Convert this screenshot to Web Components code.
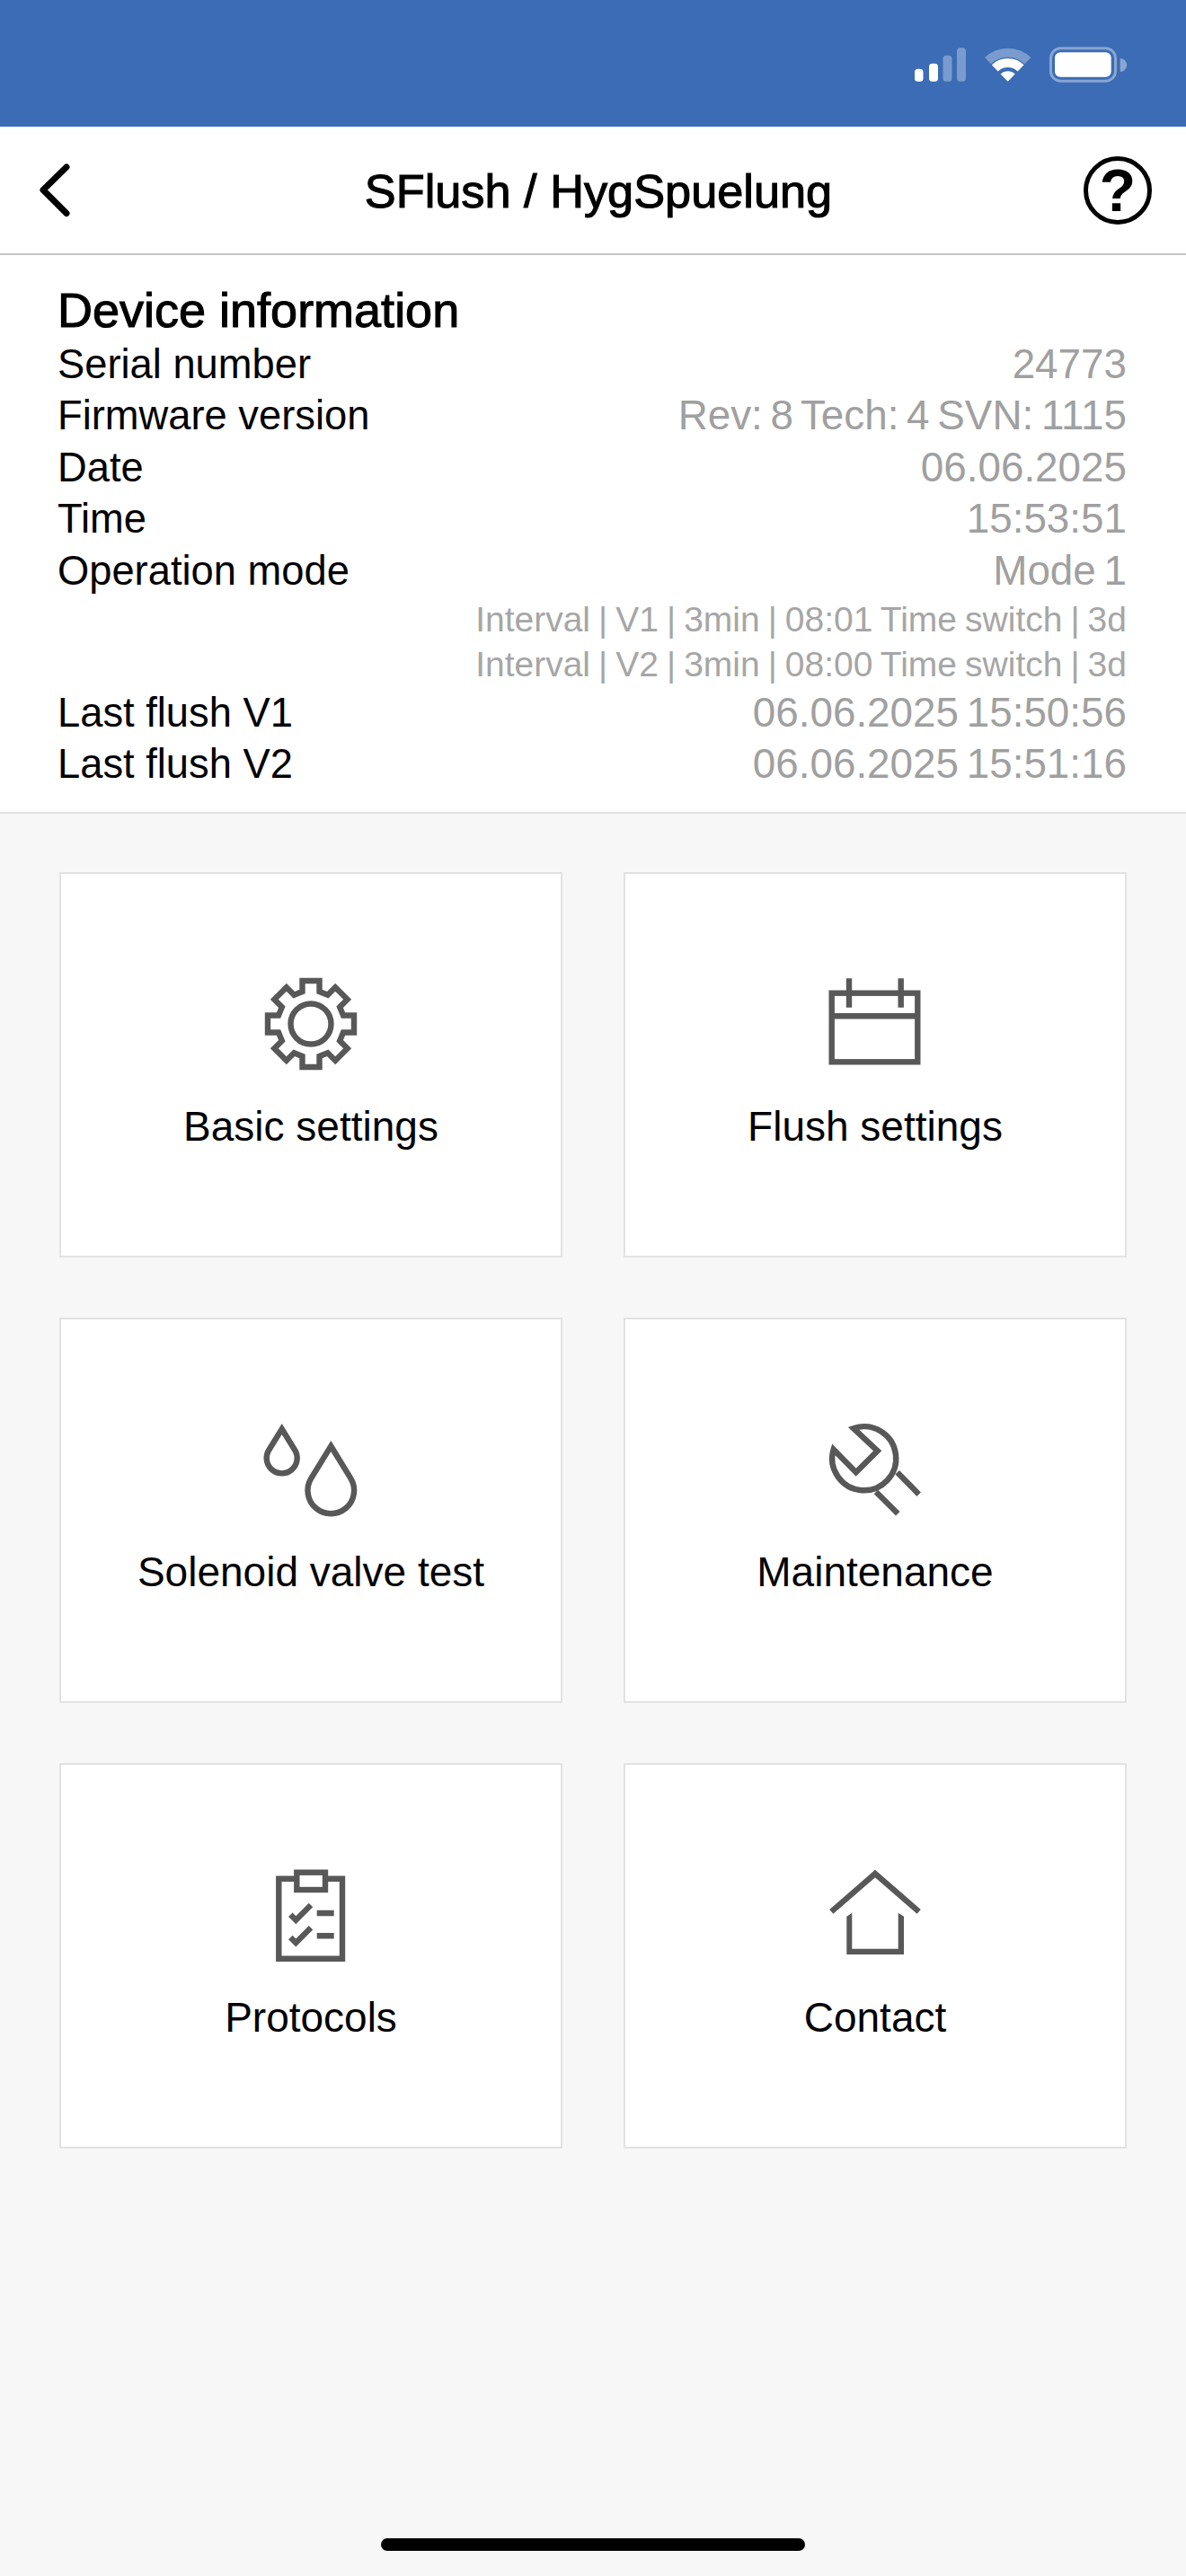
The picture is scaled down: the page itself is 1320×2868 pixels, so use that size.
<!DOCTYPE html>
<html lang="en">
<head>
<meta charset="utf-8">
<title>SFlush / HygSpuelung</title>
<style>
html,body{margin:0;padding:0;background:#f7f7f7}
body{font-family:"Liberation Sans",Arial,sans-serif;color:#000}
</style>
</head>
<body>
<app-screen>
  <status-bar></status-bar>
  <nav-header title="SFlush / HygSpuelung"></nav-header>
  <info-panel heading="Device information">
    <info-row label="Serial number" value="24773"></info-row>
    <info-row label="Firmware version" value="Rev: 8 Tech: 4 SVN: 1115"></info-row>
    <info-row label="Date" value="06.06.2025"></info-row>
    <info-row label="Time" value="15:53:51"></info-row>
    <info-row label="Operation mode" value="Mode 1"></info-row>
    <info-row small value="Interval | V1 | 3min | 08:01 Time switch | 3d"></info-row>
    <info-row small value="Interval | V2 | 3min | 08:00 Time switch | 3d"></info-row>
    <info-row label="Last flush V1" value="06.06.2025 15:50:56"></info-row>
    <info-row label="Last flush V2" value="06.06.2025 15:51:16"></info-row>
  </info-panel>
  <menu-grid>
    <menu-card label="Basic settings"><line-icon name="gear"></line-icon></menu-card>
    <menu-card label="Flush settings"><line-icon name="calendar"></line-icon></menu-card>
    <menu-card label="Solenoid valve test"><line-icon name="drops"></line-icon></menu-card>
    <menu-card label="Maintenance"><line-icon name="wrench"></line-icon></menu-card>
    <menu-card label="Protocols"><line-icon name="clipboard"></line-icon></menu-card>
    <menu-card label="Contact"><line-icon name="house"></line-icon></menu-card>
  </menu-grid>
  <home-bar></home-bar>
</app-screen>
<script>
function gearPath(){
  var pts=[],teeth=[[-9.5,-36],[-9.5,-48],[9.5,-48],[9.5,-36]];
  for(var i=0;i<8;i++){
    var a=i*Math.PI/4,c=Math.cos(a),s=Math.sin(a);
    teeth.forEach(function(p){pts.push((60+p[0]*c-p[1]*s).toFixed(2)+' '+(60+p[0]*s+p[1]*c).toFixed(2));});
  }
  return 'M'+pts.join('L')+'Z';
}
var ICONS={
  gear:'<path d="'+gearPath()+'"/><circle cx="60" cy="60" r="22.5"/>',
  calendar:'<rect x="11.7" y="25.7" width="95.6" height="76.6"/><path d="M11.7 51.3H107.3M31 9.3V41.7M88.7 9.3V41.7"/>',
  drops:'<path d="M27.7 15L42.2 38.5A17 17 0 1 1 13.2 38.5Z"/><path d="M82.3 34L104.3 69.9A25.8 25.8 0 1 1 60.3 69.9Z"/>',
  wrench:'<path d="M36 14.3L62.7 39.3L38.7 63.3L13.7 37.7A35.5 35.5 0 1 0 36 14.3Z"/><path d="M84.7 63.3L108.7 87.7M61 85L85.3 109.3"/>',
  clipboard:'<path d="M44.3 19.7H24.3V108.7H95V19.7H76"/><rect x="44.3" y="12.7" width="31.7" height="19.3"/><path d="M37.3 59.7L43.3 65.7L60 49M37.3 85L43.3 91L60 74.3M66.7 58H85.7M66.7 83.3H85.7"/>',
  house:'<path d="M11.3 56.3L60 14L108.7 56.3"/><path fill="#585858" stroke="none" d="M28.3 61.7L34.3 57.7V97.7H85.7V57.7L92 61.7V104H28.3Z"/>'
};
function def(name,css,html){
  customElements.define(name,class extends HTMLElement{
    connectedCallback(){
      if(this.shadowRoot)return;
      var r=this.attachShadow({mode:'open'});
      r.innerHTML='<style>'+css+'</style>'+(typeof html==='function'?html(this):html);
    }
  });
}
var F='"Liberation Sans",Arial,sans-serif';
def('app-screen',':host{display:flex;flex-direction:column;width:1320px;height:2868px;background:#f7f7f7;overflow:hidden}','<slot></slot>');
def('status-bar',':host{display:flex;justify-content:flex-end;box-sizing:border-box;height:141px;padding:30px 50px 0 0;background:#3b6cb5}svg{display:block}',
`<svg width="280" height="70" viewBox="990 30 280 70" fill="#fff">
<rect x="1018" y="76.7" width="9.5" height="14" rx="3.5"/>
<rect x="1034" y="70.7" width="10" height="20" rx="3.5"/>
<rect x="1049.5" y="61.7" width="10" height="29" rx="3.5" opacity=".32"/>
<rect x="1065" y="53.3" width="10" height="37.4" rx="3.5" opacity=".32"/>
<g transform="translate(1121.7 90.7)">
<path d="M-8-8.3A11.5 11.5 0 0 1 8-8.3L0 0Z"/>
<path d="M-14.4-14.9A20.7 20.7 0 0 1 14.4-14.9" fill="none" stroke="#fff" stroke-width="10"/>
<path d="M-22.2-23A32 32 0 0 1 22.2-23" fill="none" stroke="#fff" stroke-width="10" opacity=".32"/>
</g>
<rect x="1169.5" y="53.8" width="72" height="36.4" rx="11" fill="none" stroke="#fff" stroke-width="3" opacity=".4"/>
<rect x="1174" y="58.3" width="62.7" height="27.4" rx="6"/>
<path d="M1246.7 65A7.5 7.5 0 0 1 1246.7 80Z" opacity=".4"/>
</svg>`);
def('nav-header',':host{display:grid;grid-template-columns:1fr auto 1fr;align-items:center;box-sizing:border-box;height:143px;padding:0 38px 0 40px;background:#fff;border-bottom:2px solid #c4c4c4}'+
'.t{font:400 52.3px/60px '+F+';-webkit-text-stroke:1.1px #000;color:#000;position:relative;left:5px;top:1px}'+
'.h{justify-self:end;box-sizing:border-box;width:76px;height:76px;border:5px solid #000;border-radius:50%;display:flex;align-items:center;justify-content:center;font:700 66px/1 '+F+';color:#000}'+
'svg{display:block}',
function(el){return `<svg width="40" height="64" viewBox="0 0 40 64" fill="none" stroke="#000" stroke-width="7" stroke-linecap="round" stroke-linejoin="round"><path d="M34 6L8 31.5L34 57.5"/></svg><div class="t">${el.getAttribute('title')}</div><div class="h">?</div>`});
def('info-panel',':host{display:block;box-sizing:border-box;height:622px;padding:30px 66px 0 64px;background:#fff;border-bottom:2px solid #e2e2e2}'+
'.h{height:62.6px;font:400 54px/62px '+F+';-webkit-text-stroke:1.1px #000;color:#000}',
function(el){return `<div class="h">${el.getAttribute('heading')}</div><slot></slot>`});
def('info-row',':host{display:flex;justify-content:space-between;height:57.6px;font:400 45.3px/57.6px '+F+';color:#000;white-space:nowrap}'+
':host([small]){height:50px;line-height:50px;font-size:39px}'+
'.v{color:#a0a0a0;font-size:45.8px;word-spacing:-4px}:host([small]) .v{color:#a6a6a6;font-size:39px;word-spacing:-1.8px}',
function(el){return `<span>${el.getAttribute('label')||''}</span><span class="v">${el.getAttribute('value')}</span>`});
def('menu-grid',':host{display:grid;grid-template-columns:560px 560px;grid-auto-rows:429px;column-gap:68px;row-gap:67px;padding:65px 66px 0}','<slot></slot>');
def('menu-card',':host{display:flex;flex-direction:column;align-items:center;box-sizing:border-box;padding-top:107px;background:#fff;border:2px solid #e2e2e2}'+
'.l{margin-top:29px;font:400 46px/50px '+F+';color:#000;white-space:nowrap}',
function(el){return `<slot></slot><div class="l">${el.getAttribute('label')}</div>`});
def('line-icon',':host{display:block;width:120px;height:120px}svg{display:block}',
function(el){return `<svg width="120" height="120" viewBox="0 0 120 120" fill="none" stroke="#585858" stroke-width="6.4" stroke-linejoin="miter">${ICONS[el.getAttribute('name')]}</svg>`});
def('home-bar',':host{display:block;box-sizing:border-box;width:472px;height:14px;margin:auto auto 28px;background:#000;border-radius:7px}','');
</script>
</body>
</html>
